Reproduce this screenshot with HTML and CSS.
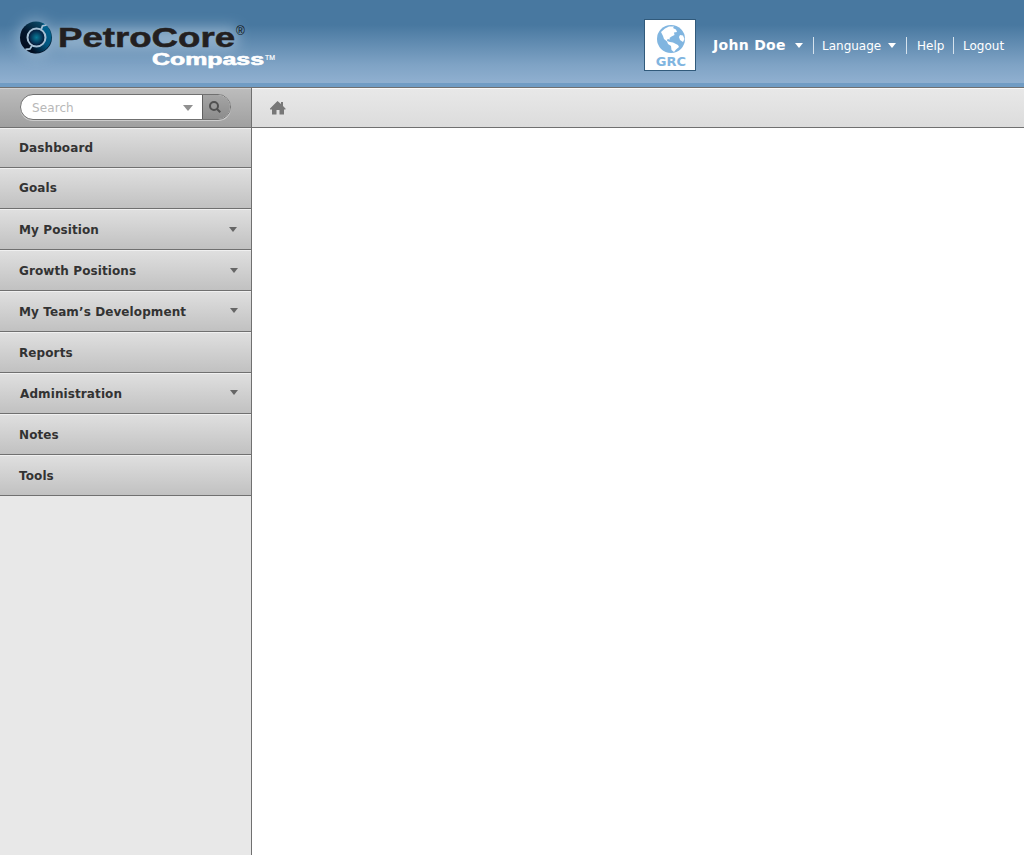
FILE: index.html
```html
<!DOCTYPE html>
<html lang="en">
<head>
<meta charset="utf-8">
<title>PetroCore Compass</title>
<link rel="stylesheet" href="styles.css">
</head>
<body>
<header class="header">
  <svg class="brand" width="290" height="84" viewBox="0 0 290 84" role="img" aria-label="PetroCore Compass">
    <defs>
      <filter id="glow" x="-20%" y="-60%" width="140%" height="220%"><feGaussianBlur stdDeviation="7"/></filter>
      <linearGradient id="ring-left" x1="0" y1="1" x2=".8" y2="0"><stop offset="0" stop-color="#020818"/><stop offset=".5" stop-color="#04162c"/><stop offset="1" stop-color="#0b5675"/></linearGradient>
      <linearGradient id="ring-right" x1=".2" y1="1" x2="1" y2="0"><stop offset="0" stop-color="#020d20"/><stop offset=".45" stop-color="#00557f"/><stop offset="1" stop-color="#006795"/></linearGradient>
      <radialGradient id="core"><stop offset="0" stop-color="#087b98"/><stop offset="1" stop-color="#052043"/></radialGradient>
    </defs>
    <g filter="url(#glow)" fill="#b9cfe2" opacity=".55"><circle cx="36" cy="38" r="18"/><rect x="56" y="27" width="181" height="22"/></g>
    <circle cx="36" cy="37.5" r="16" fill="url(#ring-left)"/>
    <path d="M43 23.200A16 16 0 0 1 30 52.300L32 46A9.500 9.500 0 0 0 41 29.500Z" fill="url(#ring-right)"/>
    <circle cx="36.500" cy="37.500" r="9" fill="none" stroke="#a5bfd4" stroke-width="2"/>
    <path d="M41 30L42.500 26L46.500 25M32 45.500L30 49L25.500 49.500" fill="none" stroke="#a5bfd4" stroke-width="1.800"/>
    <circle cx="36.500" cy="37.500" r="7.500" fill="url(#core)"/>
    <text class="brand-name" x="58" y="47.300" textLength="177" lengthAdjust="spacingAndGlyphs">PetroCore</text>
    <text class="brand-reg" x="236" y="35">®</text>
    <text class="brand-sub" x="152" y="65" textLength="112" lengthAdjust="spacingAndGlyphs">Compass</text>
    <text class="brand-tm" x="265" y="60" textLength="10" lengthAdjust="spacingAndGlyphs">TM</text>
  </svg>
  <div class="account">
    <div class="badge">
      <svg width="28" height="28" viewBox="0 0 28 28"><circle cx="14" cy="14" r="14" fill="#80b5e0"/><path d="M4 7L8 3.500L12 1.500L17 1.500L16 3L19 4.500L20 7L17 7.500L17.500 10L14.500 11.500L12.500 13L13 14.500L10.500 14L10 16L13 17L16 17.500L21 20L22 22L19 24.500L17 27L14.500 25L14 21L11 19L10 16.500L7 14L6 11L5 9Z" fill="#fff"/><path d="M23 10L26 10.500L27.500 14L26 17L23 15L22 12Z" fill="#fff"/></svg>
      <span class="badge-label">GRC</span>
    </div>
    <a class="user">John Doe</a><svg class="user-arrow" width="8" height="5"><path d="M0 0H8L4 5Z"/></svg>
    <a class="link language">Language <svg class="lang-arrow" width="8" height="5"><path d="M0 0H8L4 5Z"/></svg></a>
    <a class="link help">Help</a>
    <a class="link logout">Logout</a>
  </div>
</header>
<div class="body">
  <aside class="sidebar">
    <div class="search-bar">
      <div class="search">
        <span class="search-text">Search</span>
        <svg class="search-arrow" width="10" height="6"><path d="M0 0H10L5 6Z"/></svg>
        <span class="search-button"><svg width="13" height="13" viewBox="0 0 13 13"><circle cx="5" cy="5" r="4" /><path d="M8 8L11.300 11.300"/></svg></span>
      </div>
    </div>
    <nav class="menu">
      <a class="item first">Dashboard</a>
      <a class="item">Goals</a>
      <a class="item low">My Position<svg class="arrow pos" width="8" height="5"><path d="M0 0H8L4 5Z"/></svg></a>
      <a class="item low">Growth Positions<svg class="arrow" width="8" height="5"><path d="M0 0H8L4 5Z"/></svg></a>
      <a class="item low">My Team’s Development<svg class="arrow up" width="8" height="5"><path d="M0 0H8L4 5Z"/></svg></a>
      <a class="item low">Reports</a>
      <a class="item low admin">Administration<svg class="arrow up" width="8" height="5"><path d="M0 0H8L4 5Z"/></svg></a>
      <a class="item low">Notes</a>
      <a class="item low">Tools</a>
    </nav>
  </aside>
  <main class="main">
    <div class="crumbs"><svg width="16" height="14" viewBox="0 0 16 14"><path d="M7.500 0L11 3V1H13V5L15.500 7.500V8.500H14V13.500H9.500V9H6.500V13.500H2V8.500H0V7.500Z" fill="#777"/></svg></div>
  </main>
</div>
</body>
</html>
```
FILE: styles.css
```css
* { box-sizing: border-box; }
body { margin: 0; height: 855px; display: flex; flex-direction: column; overflow: hidden; background: #fff; font-family: Verdana, "DejaVu Sans", sans-serif; }
.header { height: 88px; flex: none; display: flex; justify-content: space-between; background: linear-gradient(#4878a0 0, #4878a0 25px, #7fa3c5 65px, #90b0d0 83px, #709cc4 83px, #709cc4 87px, #707070 87px); }
.brand { display: block; }
.brand-name { font: bold 27px "Liberation Sans", sans-serif; fill: #231f20; stroke: #231f20; stroke-width: .5px; }
.brand-reg { font: 12px "Liberation Sans", sans-serif; fill: #111; }
.brand-sub { font: bold 16px "Liberation Sans", sans-serif; fill: #fff; stroke: #fff; stroke-width: .6px; }
.brand-tm { font: 8px "Liberation Sans", sans-serif; fill: #fff; stroke: #fff; stroke-width: .2px; }
.account { display: flex; width: 380px; padding-top: 19px; color: #fff; }
.user-arrow path, .lang-arrow path { fill: #fff; }
.badge { width: 52px; height: 52px; flex: none; display: flex; flex-direction: column; align-items: center; padding: 5px 0 0 2px; background: #fff; border: 1px solid #315a7b; }
.badge-label { margin-top: 1px; font-size: 13px; line-height: 15px; font-weight: bold; letter-spacing: .1px; color: #80b5e0; }
.user { width: 74px; margin: 16px 0 0 17px; font-size: 14px; line-height: 20px; font-weight: bold; white-space: nowrap; letter-spacing: .3px; }
.user-arrow { flex: none; margin: 24px 10px 0 8px; }
.link { flex: none; height: 17px; margin-top: 18px; border-left: 1px solid #d5e2ed; font-size: 12px; line-height: 18px; white-space: nowrap; }
.language { width: 93px; padding-left: 8px; display: flex; justify-content: space-between; }
.lang-arrow { margin: 6px 10px 0 0; }
.help { width: 47px; padding-left: 10px; }
.logout { padding-left: 9px; }
.body { flex: 1; display: flex; }
.sidebar { width: 252px; background: #e8e8e8; border-right: 1px solid #707070; }
.search-bar { height: 40px; padding: 6px 20px; border-bottom: 1px solid #707070; background: linear-gradient(#d0d0d0 0, #d0d0d0 1px, #bcbcbc 1px, #a0a0a0); }
.search { width: 211px; height: 26px; display: flex; border: 1px solid #707070; border-radius: 13px; overflow: hidden; background: #fff; box-shadow: 0 1px 0 #ccc; }
.search-text { width: 151px; padding-left: 11px; font-size: 12px; line-height: 26px; letter-spacing: .1px; color: #b8b8b8; }
.search-arrow { margin: 10px 9px 0 11px; fill: #909090; }
.search-button { flex: 1; padding: 6px 0 0 6px; border-left: 1px solid #606060; background: linear-gradient(#a5a5a5, #8c8c8c); }
.search-button svg { display: block; fill: none; stroke: #505050; stroke-width: 2; }
.item { height: 41px; display: flex; justify-content: space-between; padding: 0 13px 0 19px; border-bottom: 1px solid #707070; background: linear-gradient(#f0f0f0 0, #f0f0f0 1px, #dfdfdf 1px, #c1c1c1); font-size: 12px; line-height: 41px; letter-spacing: .1px; font-weight: bold; color: #333; }
.first { height: 40px; }
.low { line-height: 43px; }
.admin { padding-left: 20px; }
.arrow { margin-top: 18px; fill: #666; }
.arrow.pos { margin-right: 1px; }
.arrow.up { margin-top: 17px; }
.main { flex: 1; }
.crumbs { height: 40px; padding: 13px 0 0 18px; border-bottom: 1px solid #707070; background: linear-gradient(#f8f8f8 0, #f8f8f8 1px, #e8e8e8 1px, #dcdcdc); }
.crumbs svg { display: block; }
```
